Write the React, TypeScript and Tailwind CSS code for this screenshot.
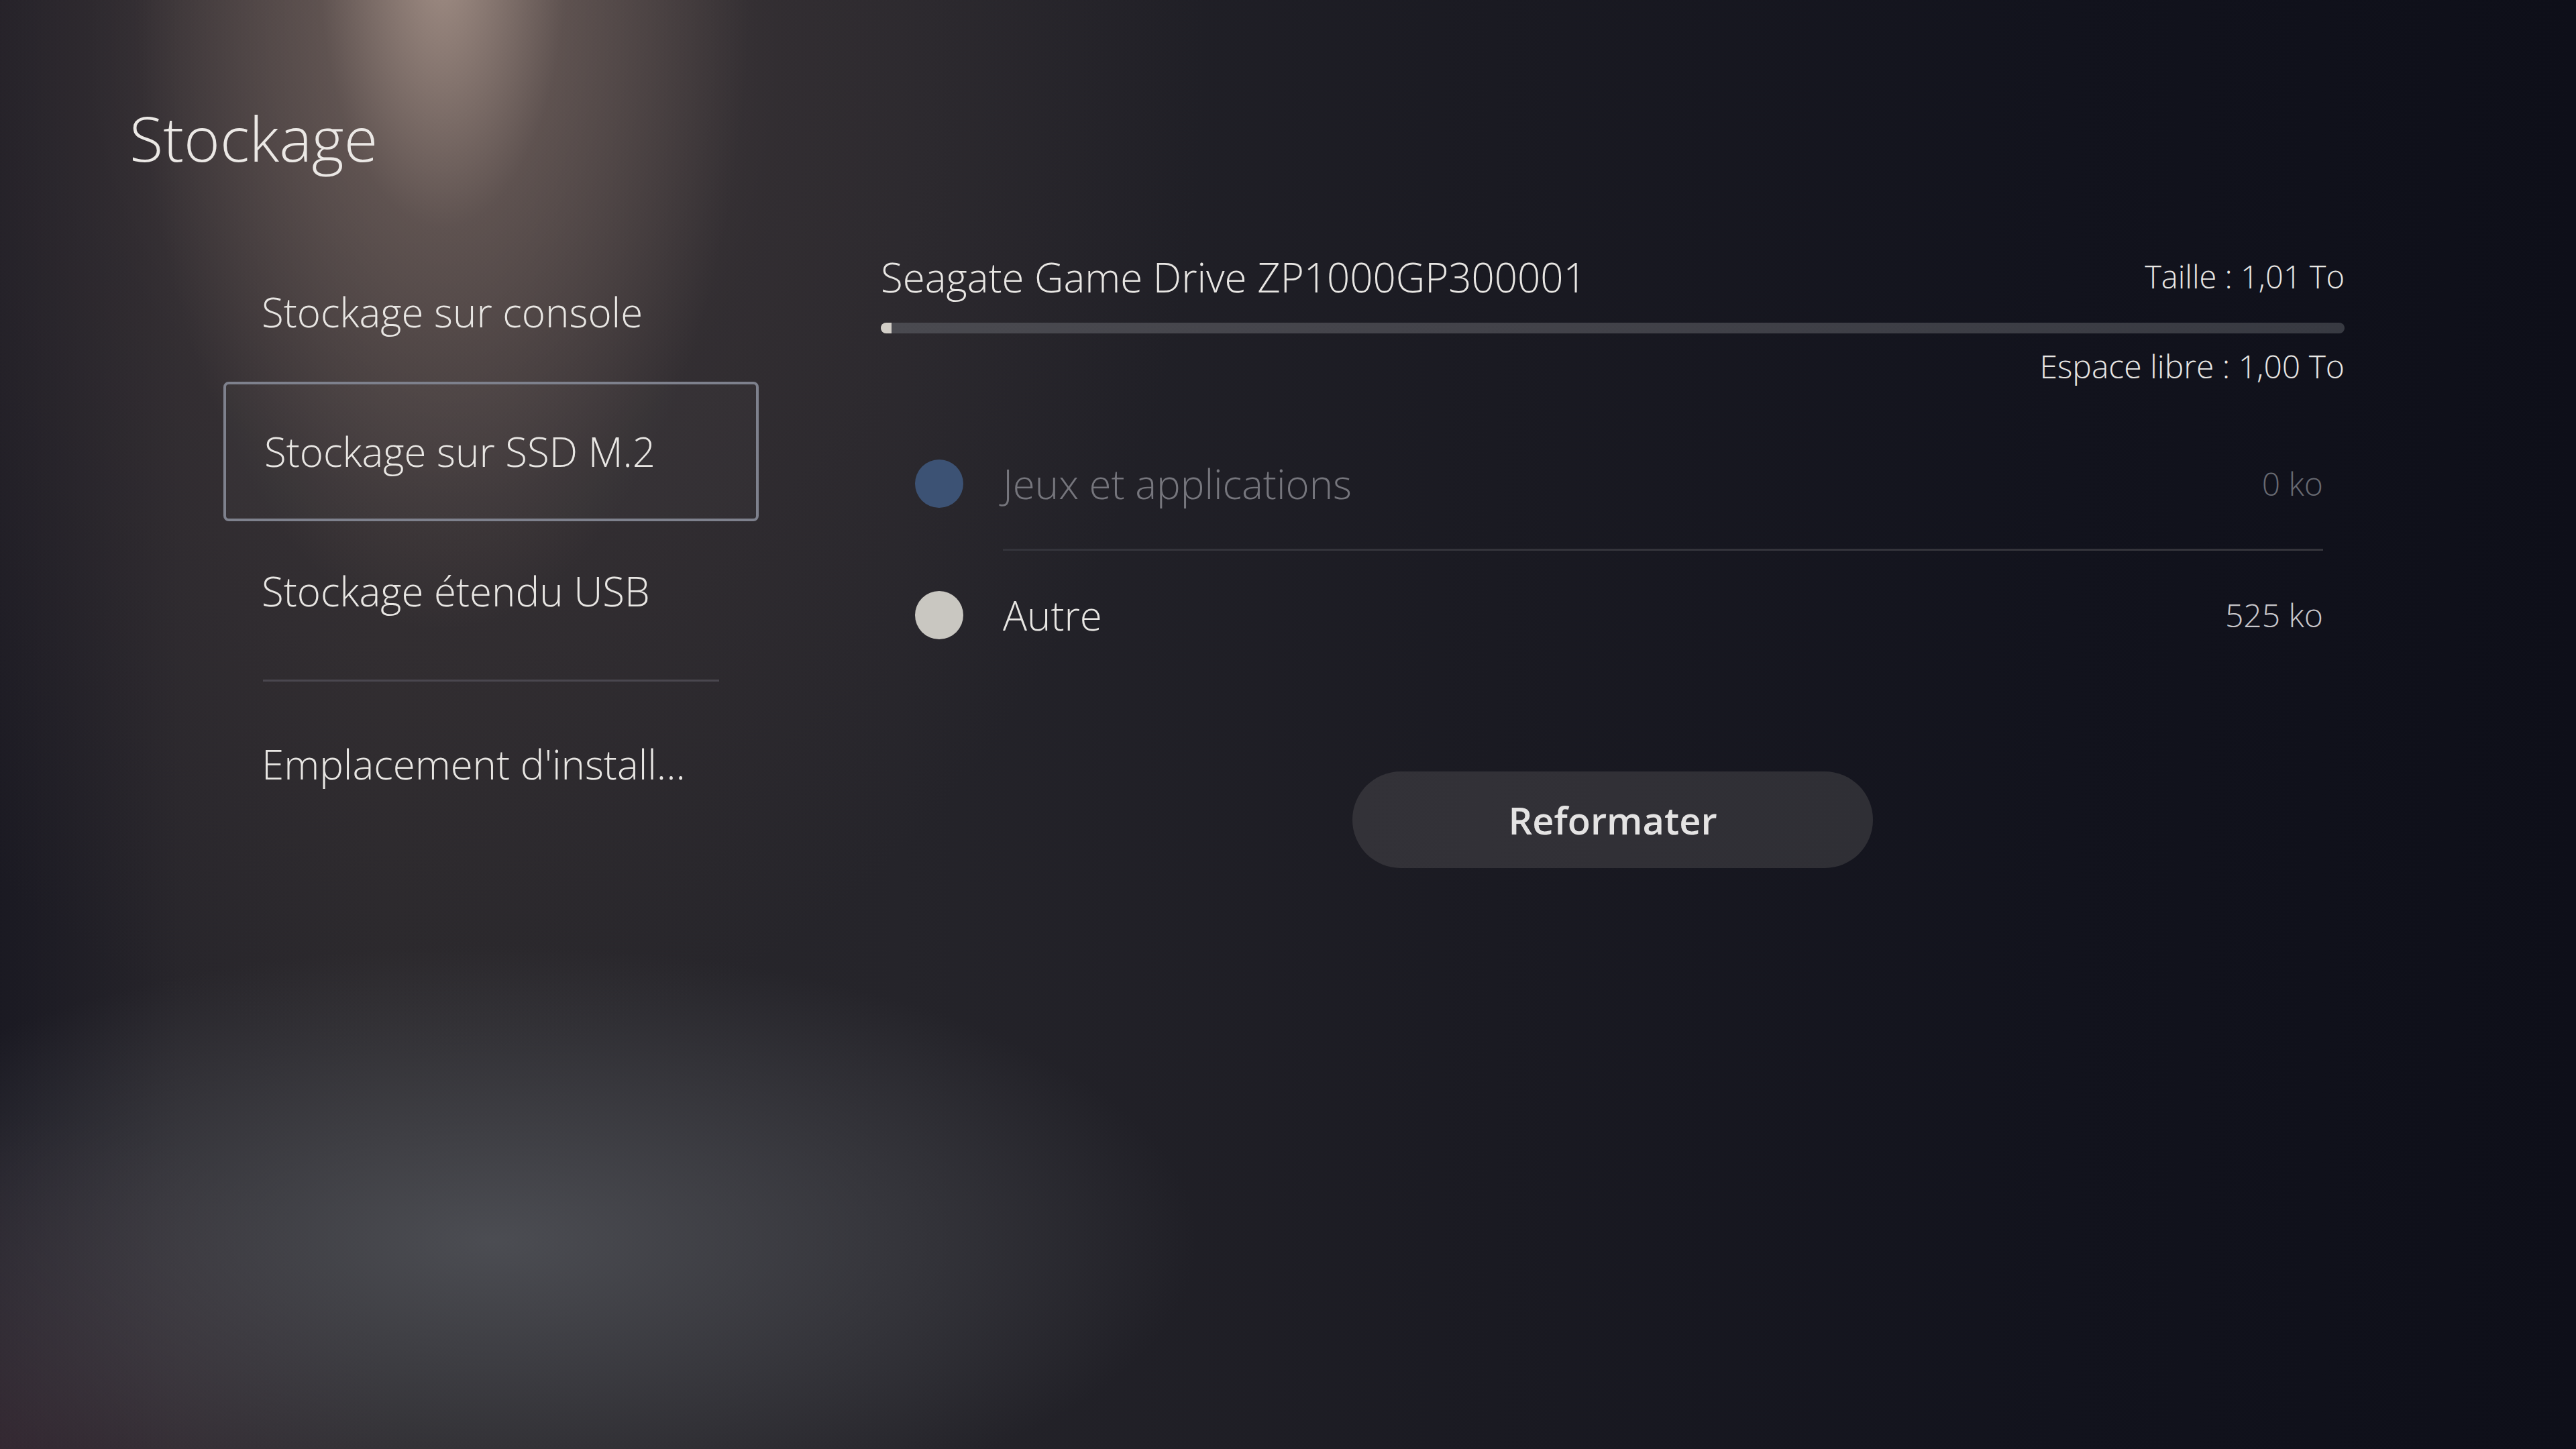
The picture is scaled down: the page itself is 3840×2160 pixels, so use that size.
import React from "react";

const menu = [
  { label: "Stockage sur console", selected: false },
  { label: "Stockage sur SSD M.2", selected: true },
  { label: "Stockage étendu USB", selected: false },
];

interface UsageRowProps {
  dot: string;
  label: string;
  size: string;
  dim?: boolean;
  className?: string;
}

const UsageRow: React.FC<UsageRowProps> = ({ dot, label, size, dim, className }) => (
  <div className={`flex items-center ${className ?? ""}`}>
    <span className={`w-[72px] h-[72px] rounded-full shrink-0 ${dot}`} />
    <span
      className={`ml-[59px] flex-1 text-[60px] leading-[80px] ${
        dim ? "text-[#76767d]" : "text-[#e8e6e3]"
      }`}
    >
      {label}
    </span>
    <span
      className={`text-[48px] leading-[60px] ${
        dim ? "text-[#686a72]" : "text-[#c9c8cc]"
      }`}
    >
      {size}
    </span>
  </div>
);

export default function App() {
  return (
    <div className="w-full h-screen overflow-hidden font-light font-['Open_Sans','Noto_Sans',sans-serif] text-[#e8e6e3] bg-[radial-gradient(ellipse_460px_1000px_at_660px_-60px,rgba(170,150,140,0.9),rgba(135,116,108,0.4)_40%,transparent_100%),radial-gradient(ellipse_1150px_1500px_at_650px_80px,rgba(105,90,88,0.55),rgba(80,68,68,0.28)_45%,transparent_100%),radial-gradient(ellipse_1050px_440px_at_735px_1850px,rgba(84,86,92,0.8),transparent_100%),radial-gradient(ellipse_600px_500px_at_0px_2160px,rgba(72,52,62,0.55),transparent_100%),linear-gradient(90deg,rgba(18,18,28,0.55)_0%,transparent_7%),linear-gradient(90deg,#25232a_0%,#2a282c_15%,#25242a_35%,#1a1a22_58%,#12131d_80%,#0e0f19_100%)]">
      {/* Title */}
      <h1 className="pl-[193px] pt-[156px] text-[92px] leading-[100px] font-light text-[#ebe8e5]">
        Stockage
      </h1>

      <div className="flex mt-[105px]">
        {/* Left menu */}
        <div className="ml-[333px] w-[798px] flex flex-col">
          {menu.map((item) => (
            <div
              key={item.label}
              className={`h-[208px] flex items-center px-[57px] text-[60px] leading-[80px] rounded-[8px] ${
                item.selected
                  ? "border-[4px] border-[#7e818d] px-[53px] bg-white/[0.02]"
                  : ""
              }`}
            >
              {item.label}
            </div>
          ))}
          <div className="mx-[59px] mt-[28px] mb-[19px] h-[3px] bg-[#4a474f]" />
          <div className="h-[208px] flex items-center px-[57px] text-[60px] leading-[80px]">
            Emplacement d'install...
          </div>
        </div>

        {/* Right panel */}
        <div className="ml-[182px] w-[2182px] flex flex-col">
          <div className="mt-[12px] flex justify-between items-start">
            <span className="text-[60px] leading-[80px]">Seagate Game Drive ZP1000GP300001</span>
            <span className="text-[47px] leading-[78px]">Taille : 1,01 To</span>
          </div>
          <div className="mt-[28px] h-[16px] rounded-full overflow-hidden bg-[linear-gradient(90deg,#4a4a50,#43434a_40%,#383a42_100%)]">
            <div className="w-[16px] h-full bg-[#d2cec7]" />
          </div>
          <div className="mt-[19px] text-right text-[48px] leading-[60px]">
            Espace libre : 1,00 To
          </div>

          <div className="mt-[48px] ml-[51px] mr-[32px] flex flex-col">
            <UsageRow
              dot="bg-[#3c5274]"
              label="Jeux et applications"
              size="0 ko"
              dim
              className="h-[194px]"
            />
            <div className="ml-[131px] h-[3px] bg-[#34343b]" />
            <UsageRow
              dot="bg-[#c9c7c1]"
              label="Autre"
              size="525 ko"
              className="h-[192px]"
            />
          </div>

          <button className="mt-[137px] mx-auto w-[776px] h-[144px] rounded-full bg-[linear-gradient(90deg,#333238,#313036_50%,#2f2f35)] text-[56px] font-semibold text-[#e4e3e3]">
            Reformater
          </button>
        </div>
      </div>
    </div>
  );
}
